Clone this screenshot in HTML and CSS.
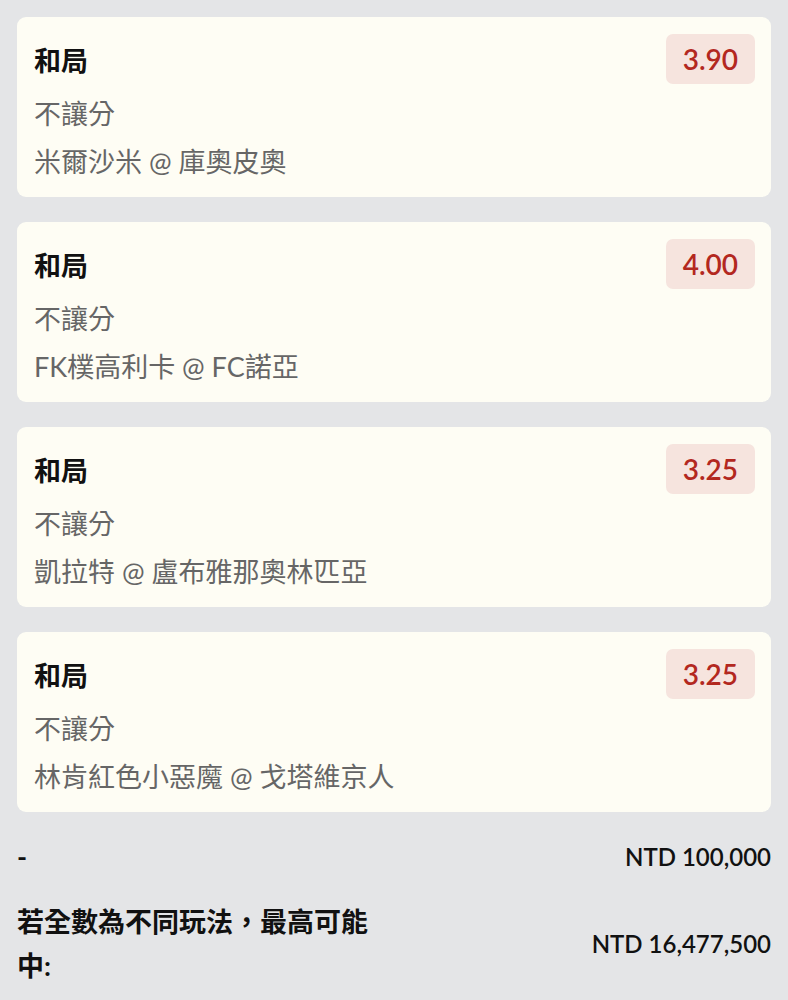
FILE: index.html
```html
<!DOCTYPE html>
<html lang="zh-Hant">
<head>
<meta charset="utf-8">
<link rel="stylesheet" href="styles.css">
</head>
<body>
<div class="page">
  <div class="card">
    <div class="head"><span class="title">和局</span><span class="odds">3.90</span></div>
    <div class="line">不讓分</div>
    <div class="line">米爾沙米 @ 庫奧皮奧</div>
  </div>
  <div class="card">
    <div class="head"><span class="title">和局</span><span class="odds">4.00</span></div>
    <div class="line">不讓分</div>
    <div class="line">FK樸高利卡 @ FC諾亞</div>
  </div>
  <div class="card">
    <div class="head"><span class="title">和局</span><span class="odds">3.25</span></div>
    <div class="line">不讓分</div>
    <div class="line">凱拉特 @ 盧布雅那奧林匹亞</div>
  </div>
  <div class="card">
    <div class="head"><span class="title">和局</span><span class="odds">3.25</span></div>
    <div class="line">不讓分</div>
    <div class="line">林肯紅色小惡魔 @ 戈塔維京人</div>
  </div>
  <div class="summary">
    <div class="row">
      <div class="label">-</div>
      <div class="amount">NTD 100,000</div>
    </div>
    <div class="row">
      <div class="label">若全數為不同玩法，最高可能中:</div>
      <div class="amount">NTD 16,477,500</div>
    </div>
  </div>
</div>
</body>
</html>
```
FILE: styles.css
```css
html, body {
  margin: 0;
  padding: 0;
  background: #e4e5e7;
}
body {
  font-family: Lato, "Noto Sans CJK TC", sans-serif;
}
.page {
  padding: 17px 17px 0 17px;
  display: flex;
  flex-direction: column;
  gap: 25px;
}
.card {
  background: #fefdf4;
  border-radius: 9px;
  padding: 17px 16px 11px 17px;
  height: 180px;
  box-sizing: border-box;
}
.head {
  display: flex;
  justify-content: space-between;
  align-items: center;
  height: 50px;
}
.title {
  font-size: 27px;
  font-weight: 700;
  color: #111;
  line-height: 50px;
  padding-top: 3px;
}
.odds {
  background: #f6e4de;
  color: #b3281f;
  font-size: 28px;
  font-weight: 600;
  line-height: 50px;
  height: 50px;
  padding: 0 17px;
  border-radius: 7px;
}
.line {
  font-size: 27px;
  line-height: 48px;
  color: #666;
}
.head + .line {
  margin-top: 6px;
}
.summary {
  margin-top: -2px;
  display: flex;
  flex-direction: column;
  gap: 21px;
}
.row {
  display: flex;
  justify-content: space-between;
  align-items: center;
}
.label {
  width: 50%;
  font-size: 27px;
  font-weight: 700;
  line-height: 44px;
  color: #111;
}
.amount {
  font-size: 24px;
  font-weight: 600;
  color: #111;
  line-height: 44px;
}
```
